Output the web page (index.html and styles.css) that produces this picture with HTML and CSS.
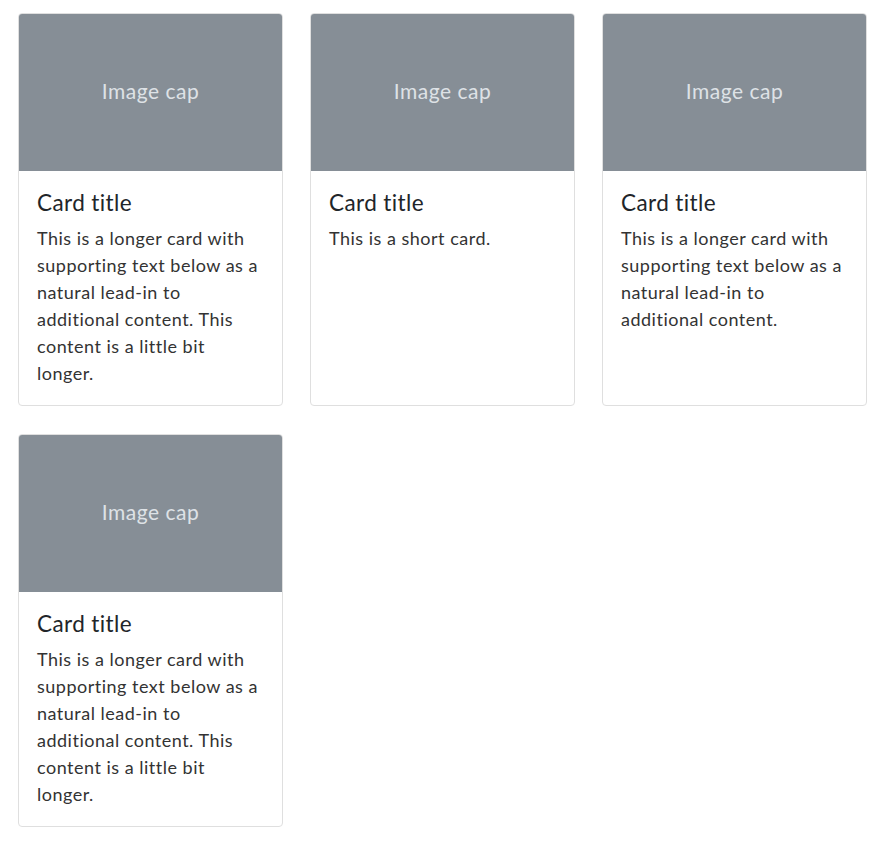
FILE: index.html
```html
<!DOCTYPE html>
<html lang="en">
  <head>
    <meta charset="UTF-8" />
    <title>Cards</title>
    <link rel="stylesheet" href="styles.css">
  </head>
  <body>
    <div class="card-grid">
      <div class="card">
        <div class="card-img">Image cap</div>
        <div class="card-body">
          <h5 class="card-title">Card title</h5>
          <p class="card-text">This is a longer card with supporting text below as a natural lead-in to additional content. This content is a little bit longer.</p>
        </div>
      </div>
      <div class="card">
        <div class="card-img">Image cap</div>
        <div class="card-body">
          <h5 class="card-title">Card title</h5>
          <p class="card-text">This is a short card.</p>
        </div>
      </div>
      <div class="card">
        <div class="card-img">Image cap</div>
        <div class="card-body">
          <h5 class="card-title">Card title</h5>
          <p class="card-text">This is a longer card with supporting text below as a natural lead-in to additional content.</p>
        </div>
      </div>
      <div class="card">
        <div class="card-img">Image cap</div>
        <div class="card-body">
          <h5 class="card-title">Card title</h5>
          <p class="card-text">This is a longer card with supporting text below as a natural lead-in to additional content. This content is a little bit longer.</p>
        </div>
      </div>
    </div>
  </body>
</html>
```

FILE: styles.css
```css
* {
  box-sizing: border-box;
  margin: 0;
  padding: 0;
}
body {
  font-family: Lato, "Noto Sans", sans-serif;
  font-size: 18px;
  line-height: 1.5;
  letter-spacing: 0.5px;
  color: #212529;
  background: #fff;
  padding: 13px 22px 0 18px;
}
.card-grid {
  display: grid;
  grid-template-columns: repeat(3, 265px);
  column-gap: 27px;
  row-gap: 28px;
  align-items: start;
}
.card {
  border: 1px solid #dfdfdf;
  border-radius: 4px;
  overflow: hidden;
  height: 100%;
}
.card-img {
  height: 157px;
  padding-bottom: 3px;
  background: #868e96;
  color: #dee2e6;
  display: flex;
  align-items: center;
  justify-content: center;
  font-size: 21px;
}
.card-body {
  padding: 18px;
}
.card-title {
  font-size: 22.5px;
  font-weight: 400;
  letter-spacing: 0.4px;
  line-height: 1.2;
  margin-bottom: 9px;
}
.card-text {
  color: #333;
}
```
